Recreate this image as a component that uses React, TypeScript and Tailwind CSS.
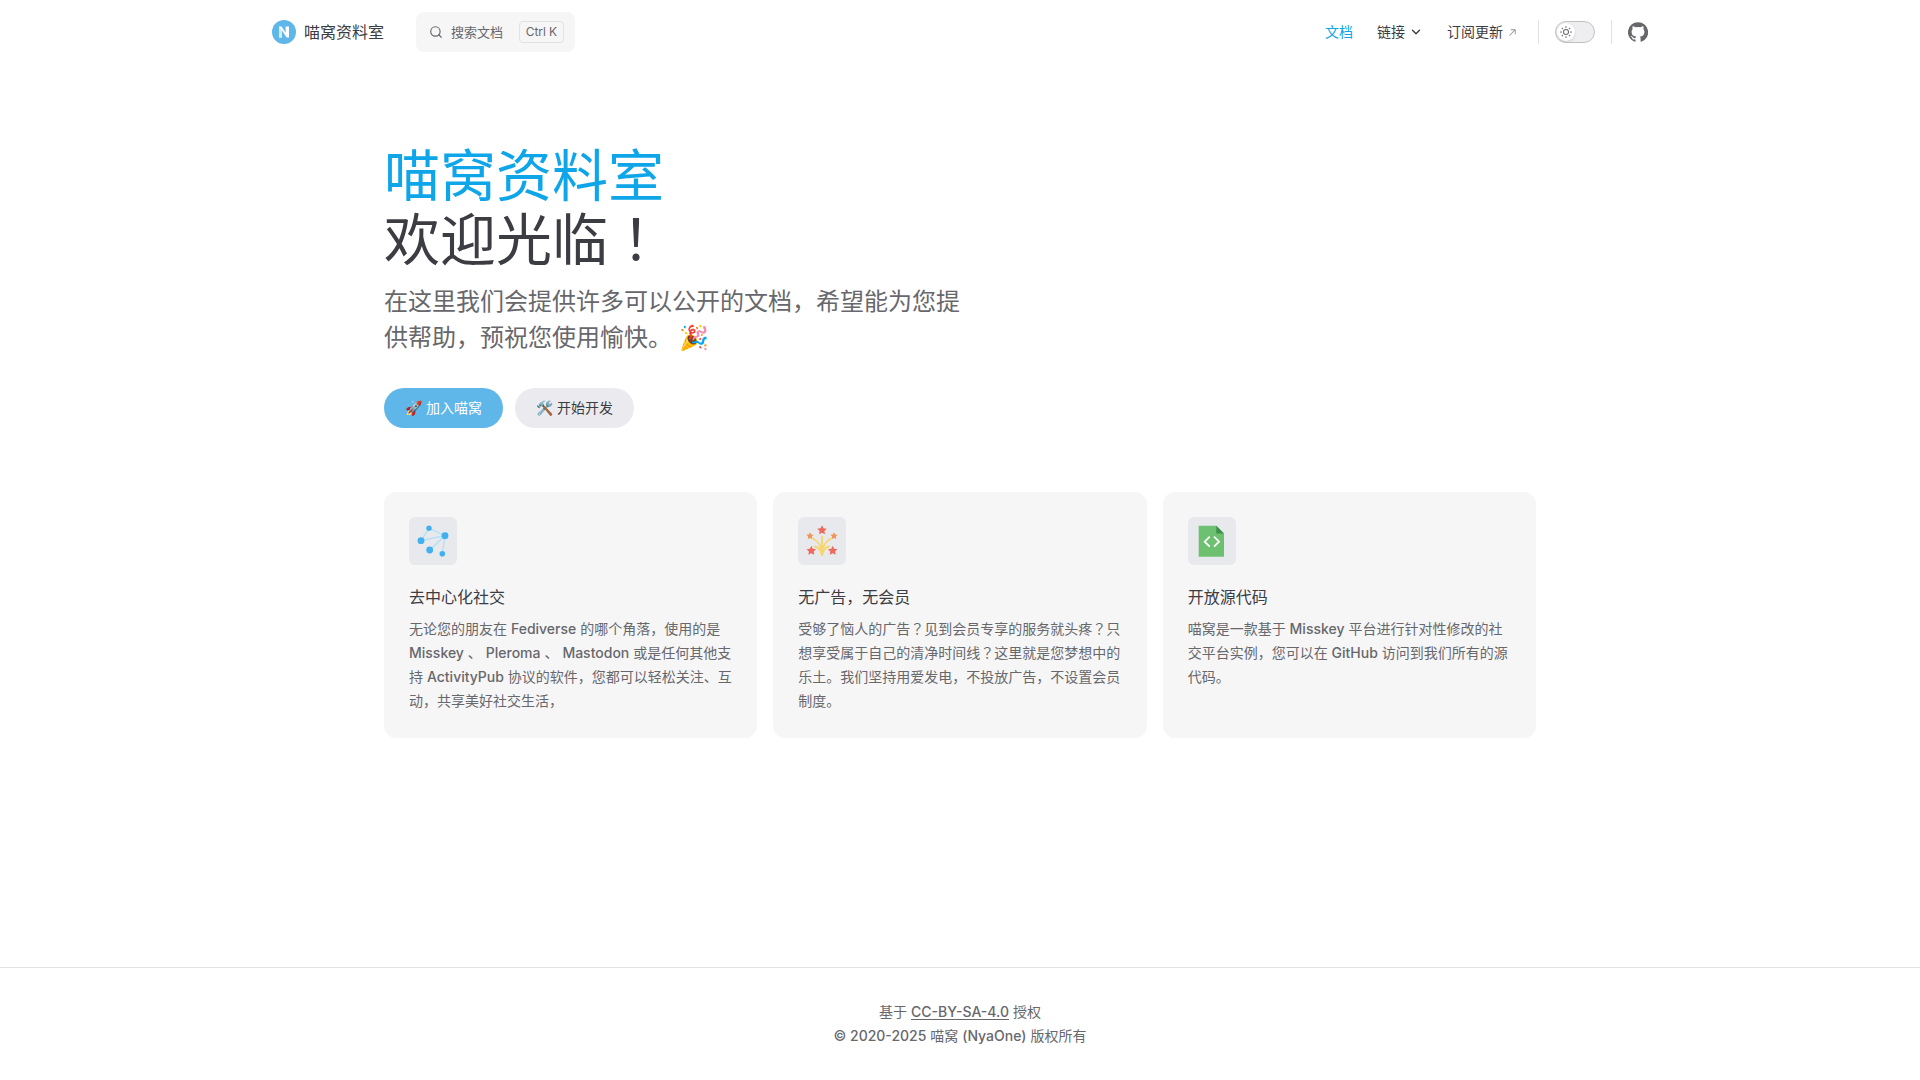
const sans = 'font-["Inter","Noto_Sans_CJK_SC",sans-serif]';

function Mark({ children }: { children: React.ReactNode }) {
  return <span className='font-["Inter","Noto_Sans_CJK_TC",sans-serif]'>{children}</span>;
}

function Arrow() {
  return (
    <svg viewBox="0 0 24 24" className="ml-1 w-[11px] h-[11px] fill-[#929295]">
      <path d="M18.7 5.3a1 1 0 0 0-.7-.3H9a1 1 0 0 0 0 2h6.6L5.3 17.3a1 1 0 0 0 1.4 1.4L17 8.4V15a1 1 0 0 0 2 0V6a1 1 0 0 0-.3-.7z" />
    </svg>
  );
}

function Logo() {
  return (
    <svg viewBox="0 0 24 24" className="w-6 h-6">
      <circle cx="12" cy="12" r="12" fill="#5fb6e9" />
      <path d="M7 6.5h2.6l4 6.3V6.5H17v11h-2.4L10 10.6v6.9H7z" fill="#fff" />
      <path d="M7 6.5l3 4v7H7z" fill="#d4ecfa" />
    </svg>
  );
}

function Github() {
  return (
    <svg viewBox="0 0 24 24" className="w-5 h-5 fill-[#67676c]">
      <path d="M12 .3a12 12 0 0 0-3.8 23.4c.6.1.8-.3.8-.6v-2.1c-3.3.7-4-1.6-4-1.6-.6-1.4-1.4-1.8-1.4-1.8-1-.7.1-.7.1-.7 1.2.1 1.8 1.2 1.8 1.2 1 1.8 2.8 1.3 3.5 1 .1-.8.4-1.3.8-1.6-2.7-.3-5.5-1.3-5.5-6 0-1.2.5-2.3 1.3-3.1-.2-.4-.6-1.6 0-3.2 0 0 1-.3 3.4 1.2a11.5 11.5 0 0 1 6 0c2.3-1.5 3.3-1.2 3.3-1.2.7 1.6.3 2.8.1 3.2.8.8 1.3 1.9 1.3 3.2 0 4.6-2.8 5.6-5.5 5.9.5.4.9 1.1.9 2.3v3.3c0 .3.2.7.8.6A12 12 0 0 0 12 .3" />
    </svg>
  );
}

function Sun() {
  return (
    <svg viewBox="0 0 24 24" className="w-3 h-3 fill-[#67676c]">
      <path d="M12 18a6 6 0 1 1 0-12 6 6 0 0 1 0 12zm0-10a4 4 0 1 0 0 8 4 4 0 0 0 0-8zM12 4a1 1 0 0 1-1-1V1a1 1 0 0 1 2 0v2a1 1 0 0 1-1 1zM12 24a1 1 0 0 1-1-1v-2a1 1 0 0 1 2 0v2a1 1 0 0 1-1 1zM5.6 6.6a1 1 0 0 1-.7-.3L3.5 4.9a1 1 0 0 1 1.4-1.4l1.4 1.4a1 1 0 0 1-.7 1.7zM19.8 20.8a1 1 0 0 1-.7-.3l-1.4-1.4a1 1 0 0 1 1.4-1.4l1.4 1.4a1 1 0 0 1-.7 1.7zM3 13H1a1 1 0 0 1 0-2h2a1 1 0 0 1 0 2zM23 13h-2a1 1 0 0 1 0-2h2a1 1 0 0 1 0 2zM4.2 20.8a1 1 0 0 1-.7-1.7l1.4-1.4a1 1 0 0 1 1.4 1.4l-1.4 1.4a1 1 0 0 1-.7.3zM18.4 6.6a1 1 0 0 1-.7-1.7l1.4-1.4a1 1 0 0 1 1.4 1.4l-1.4 1.4a1 1 0 0 1-.7.3z" />
    </svg>
  );
}

function FediIcon() {
  return (
    <svg viewBox="0 0 48 48" className="w-12 h-12">
      <g stroke="#aadffa" strokeWidth="1.2">
        <line x1="20" y1="11.3" x2="36" y2="18.7" />
        <line x1="12" y1="23.7" x2="36" y2="18.7" />
        <line x1="12" y1="23.7" x2="20" y2="11.3" />
        <line x1="20.7" y1="33" x2="36" y2="18.7" />
        <line x1="33.3" y1="36.7" x2="36" y2="18.7" />
      </g>
      <g fill="#42aff0">
        <circle cx="20" cy="11.3" r="2.7" />
        <circle cx="36" cy="18.7" r="3.4" />
        <circle cx="12" cy="23.7" r="3.4" />
        <circle cx="20.7" cy="33" r="3.4" />
        <circle cx="33.3" cy="36.7" r="2.8" />
      </g>
    </svg>
  );
}

function Star({ x, y, r, fill }: { x: number; y: number; r: number; fill: string }) {
  const pts: string[] = [];
  for (let i = 0; i < 10; i++) {
    const a = (Math.PI / 5) * i - Math.PI / 2;
    const rr = i % 2 === 0 ? r : r * 0.5;
    pts.push(`${x + rr * Math.cos(a)},${y + rr * Math.sin(a)}`);
  }
  return <polygon points={pts.join(" ")} fill={fill} />;
}

function FireworksIcon() {
  return (
    <svg viewBox="0 0 48 48" className="w-12 h-12">
      <g stroke="#f8d568" strokeWidth="1.9" fill="none" strokeLinecap="round">
        <path d="M24 19.5V38" />
        <path d="M24 38c0-8-4-14-9-16.5" />
        <path d="M24 38c0-8 4-14 9-16.5" />
        <path d="M24 38c-1-4-3.5-8-7-8.5" />
        <path d="M24 38c1-4 3.5-8 7-8.5" />
      </g>
      <Star x={24} y={13.3} r={5} fill="#ee6a5c" />
      <Star x={12} y={19} r={3.8} fill="#f0935a" />
      <Star x={36} y={19} r={3.8} fill="#f0935a" />
      <Star x={13.3} y={33.7} r={5} fill="#ee6a5c" />
      <Star x={34.7} y={33.7} r={5} fill="#ee6a5c" />
    </svg>
  );
}

function CodeIcon() {
  return (
    <svg viewBox="0 0 48 48" className="w-12 h-12">
      <path d="M10.7 8.7h17.6l7.7 7.8v23.2H10.7z" fill="#6cc070" />
      <path d="M28.3 8.7l7.7 7.8h-7.7z" fill="#3f8f48" />
      <path d="M21.7 19.7l-5 5 5 5M26 19.7l5 5-5 5" stroke="#fff" strokeWidth="1.8" fill="none" />
    </svg>
  );
}

function Card({ icon, title, children }: { icon: React.ReactNode; title: string; children: React.ReactNode }) {
  return (
    <div className="flex-1 min-w-0 rounded-xl bg-[#f6f6f7] border border-[#f6f6f7] p-6">
      <div className="w-12 h-12 rounded-md bg-[#e8e9ed] mb-5">{icon}</div>
      <h2 className="text-base leading-6 font-normal text-[#3c3c43]">{title}</h2>
      <p className="pt-2 text-sm leading-6 text-[#67676c]">{children}</p>
    </div>
  );
}

export default function App() {
  return (
    <div className={`min-h-screen flex flex-col bg-white text-[#3c3c43] ${sans}`}>
      <header className="h-16 w-[1376px] mx-auto flex items-center">
        <div className="flex items-center gap-2 text-base">
          <Logo />
          <span>喵窝资料室</span>
        </div>
        <div className="ml-8 w-[159px] h-10 rounded-lg bg-[#f6f6f7] flex items-center pl-[13px] pr-[11px]">
          <svg viewBox="0 0 24 24" className="w-[14px] h-[14px] fill-none stroke-[#67676c] stroke-2">
            <circle cx="11" cy="11" r="8" />
            <path d="m21 21-4.3-4.3" strokeLinecap="round" />
          </svg>
          <span className="ml-2 text-[13px] pt-[2px] text-[#67676c]">搜索文档</span>
          <span className="ml-auto h-[22px] px-[6px] rounded border border-[#e2e2e3] text-xs leading-[20px] text-[#67676c] whitespace-nowrap">
            Ctrl<span className="ml-[3px]">K</span>
          </span>
        </div>
        <nav className="ml-auto flex items-center text-sm">
          <span className="text-[#0ea5e9]">文档</span>
          <span className="ml-6 flex items-center">
            链接
            <svg viewBox="0 0 24 24" className="ml-1 w-[14px] h-[14px] fill-none stroke-[#3c3c43] stroke-[2.4]">
              <path d="m6 9 6 6 6-6" strokeLinecap="round" strokeLinejoin="round" />
            </svg>
          </span>
          <span className="ml-6 flex items-center">
            订阅更新
            <Arrow />
          </span>
          <span className="ml-5 w-px h-6 bg-[#e2e2e3]" />
          <span className="ml-4 w-10 h-[22px] rounded-full bg-[#eeeef1] border border-[#c2c2c4] flex items-center pl-px">
            <span className="w-[18px] h-[18px] rounded-full bg-white shadow-sm flex items-center justify-center">
              <Sun />
            </span>
          </span>
          <span className="ml-4 w-px h-6 bg-[#e2e2e3]" />
          <span className="ml-4">
            <Github />
          </span>
        </nav>
      </header>

      <main className="w-[1152px] mx-auto pt-20 pb-16">
        <h1 className="text-[56px] leading-16 font-normal">
          <span className="block text-[#0ea5e9]">喵窝资料室</span>
          <span className="block">
            欢迎光临<Mark>！</Mark>
          </span>
        </h1>
        <p className="pt-3 max-w-[576px] text-2xl leading-9 text-[#67676c]">
          在这里我们会提供许多可以公开的文档，希望能为您提供帮助，预祝您使用愉快。 🎉
        </p>
        <div className="flex gap-3 pt-8 text-sm">
          <span className="h-10 w-[119px] rounded-full flex items-center justify-center bg-[#5fb6e9] text-white">🚀 加入喵窝</span>
          <span className="h-10 w-[119px] rounded-full flex items-center justify-center bg-[#ebebef] text-[#3c3c43]">🛠️ 开始开发</span>
        </div>
        <div className="flex gap-4 mt-16">
          <Card icon={<FediIcon />} title="去中心化社交">
            无论您的朋友在 <b className="font-medium">Fediverse</b> 的哪个角落，使用的是 <b className="font-medium">Misskey</b> 、 <b className="font-medium">Pleroma</b> 、 <b className="font-medium">Mastodon</b> 或是任何其他支持 <b className="font-medium">ActivityPub</b> 协议的软件，您都可以轻松关注、互动，共享美好社交生活，
          </Card>
          <Card icon={<FireworksIcon />} title="无广告，无会员">
            受够了恼人的广告<Mark>？</Mark>见到会员专享的服务就头疼<Mark>？</Mark>只想享受属于自己的清净时间线<Mark>？</Mark>这里就是您梦想中的乐土。我们坚持用爱发电，不投放广告，不设置会员制度。
          </Card>
          <Card icon={<CodeIcon />} title="开放源代码">
            喵窝是一款基于 <b className="font-medium">Misskey</b> 平台进行针对性修改的社交平台实例，您可以在 <b className="font-medium">GitHub</b> 访问到我们所有的源代码。
          </Card>
        </div>
      </main>

      <footer className="mt-auto border-t border-[#e2e2e3] py-8 text-center text-sm leading-6 text-[#67676c]">
        <div>
          基于 <span className="font-medium underline underline-offset-2">CC-BY-SA-4.0</span> 授权
        </div>
        <div>
          <span className="font-medium">© 2020-2025</span> 喵窝 <span className="font-medium">(NyaOne)</span> 版权所有
        </div>
      </footer>
    </div>
  );
}
